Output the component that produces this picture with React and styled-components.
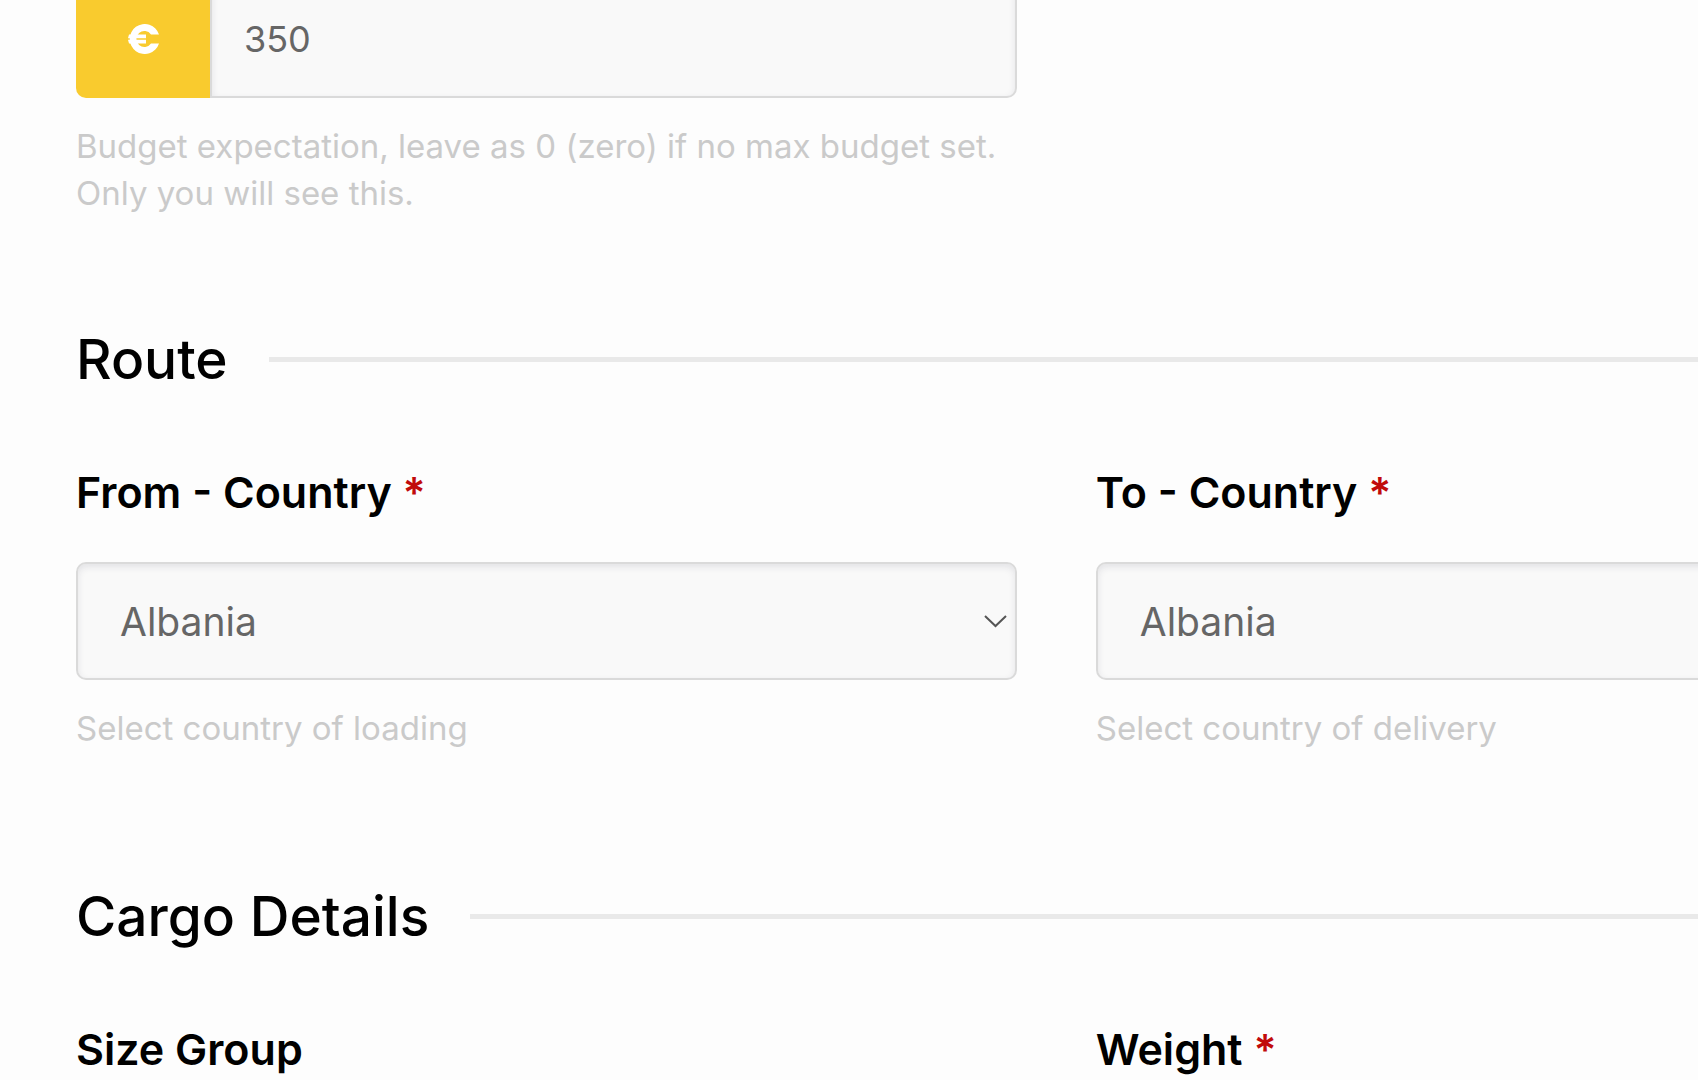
import { useState } from 'react'
import styled, { createGlobalStyle } from 'styled-components'

const GlobalStyle = createGlobalStyle`
  * {
    box-sizing: border-box;
  }

  body {
    margin: 0;
    background-color: #fdfdfd;
    color: #000;
    font-family: Inter, 'Open Sans', sans-serif;
    overflow: hidden;
  }
`

const Form = styled.form`
  display: flex;
  flex-direction: column;
  gap: 112px;
  margin-top: -20px;
  padding-left: 76px;
  overflow: hidden;
`

const Section = styled.section`
  display: flex;
  flex-direction: column;
  gap: 73px;
`

const Columns = styled.div`
  display: grid;
  grid-template-columns: 58% 58%;
  column-gap: 79px;
  padding-bottom: ${(props) => (props.$spaced ? '22px' : '0')};
`

const Heading = styled.h2`
  display: flex;
  align-items: center;
  gap: 41px;
  margin: 0;
  font-size: 55px;
  font-weight: 500;
  line-height: 60px;

  &::after {
    content: '';
    flex: 1;
    height: 5px;
    background-color: #e9e9e9;
  }
`

const FieldDiv = styled.div`
  display: flex;
  flex-direction: column;
`

const Label = styled.label`
  margin-bottom: 40px;
  font-size: 43px;
  font-weight: 600;
  line-height: 60px;
`

const Required = styled.span`
  color: #c10b0b;
`

const Hint = styled.p`
  margin: 25px 0 0;
  color: #cacaca;
  font-size: 33px;
  line-height: 47px;
`

const BudgetBox = styled.div`
  display: flex;
  height: 118px;
`

const Currency = styled.span`
  display: flex;
  align-items: center;
  justify-content: center;
  width: 134px;
  border-radius: 10px 0 0 10px;
  background-color: #f9cb2e;
  color: #fff;
`

const BudgetInput = styled.input`
  flex: 1;
  min-width: 0;
  padding: 0 32px;
  border: 2px solid #dadada;
  border-radius: 0 10px 10px 0;
  outline: none;
  background-color: #f9f9f9;
  box-shadow: inset 0 3px 7px rgba(30, 30, 60, 0.1);
  color: #666;
  font: inherit;
  font-size: 36px;
`

const SelectBox = styled.div`
  position: relative;
  display: flex;
`

const Select = styled.select`
  flex: 1;
  height: 118px;
  padding: 0 42px;
  border: 2px solid #dadada;
  border-radius: 10px;
  outline: none;
  appearance: none;
  background-color: #f9f9f9;
  box-shadow: inset 0 3px 7px rgba(30, 30, 60, 0.1);
  color: #666;
  font: inherit;
  font-size: 39px;
`

const Chevron = styled.svg`
  position: absolute;
  top: 52px;
  right: 10px;
  pointer-events: none;
`

const countries = ['Albania', 'Austria', 'Belgium', 'Bulgaria', 'Croatia']

function EuroIcon() {
  return (
    <svg width="34" height="30" viewBox="-2 0 34 30" fill="currentColor">
      <path d="M31 10.500 A15 15 0 1 0 31 19.500 H23 A8 8 0 1 1 23 10.500 Z" />
      <path d="M1 10.500 H18 V14.200 H0 Z" />
      <path d="M0 15.800 H18 V19.500 H1 Z" />
    </svg>
  )
}

function CountryField({ id, label, hint }) {
  const [country, setCountry] = useState('Albania')

  return (
    <FieldDiv>
      <Label htmlFor={id}>
        {label} <Required>*</Required>
      </Label>
      <SelectBox>
        <Select
          id={id}
          value={country}
          onChange={(e) => setCountry(e.target.value)}
        >
          {countries.map((name) => (
            <option key={name}>{name}</option>
          ))}
        </Select>
        <Chevron width="24" height="16" viewBox="0 0 24 16" fill="none">
          <path d="M2 2 L12.500 12 L23 2" stroke="#555" strokeWidth="2" />
        </Chevron>
      </SelectBox>
      <Hint>{hint}</Hint>
    </FieldDiv>
  )
}

export default function App() {
  const [budget, setBudget] = useState('350')

  return (
    <>
      <GlobalStyle />
      <Form>
        <Columns>
          <FieldDiv>
            <BudgetBox>
              <Currency>
                <EuroIcon />
              </Currency>
              <BudgetInput
                aria-label="Budget in euro"
                value={budget}
                onChange={(e) => setBudget(e.target.value)}
              />
            </BudgetBox>
            <Hint>
              Budget expectation, leave as 0 (zero) if no max budget set. Only
              you will see this.
            </Hint>
          </FieldDiv>
        </Columns>

        <Section>
          <Heading>Route</Heading>
          <Columns $spaced>
            <CountryField
              id="from-country"
              label="From - Country"
              hint="Select country of loading"
            />
            <CountryField
              id="to-country"
              label="To - Country"
              hint="Select country of delivery"
            />
          </Columns>
        </Section>

        <Section>
          <Heading>Cargo Details</Heading>
          <Columns>
            <Label as="div">Size Group</Label>
            <Label as="div">
              Weight <Required>*</Required>
            </Label>
          </Columns>
        </Section>
      </Form>
    </>
  )
}
